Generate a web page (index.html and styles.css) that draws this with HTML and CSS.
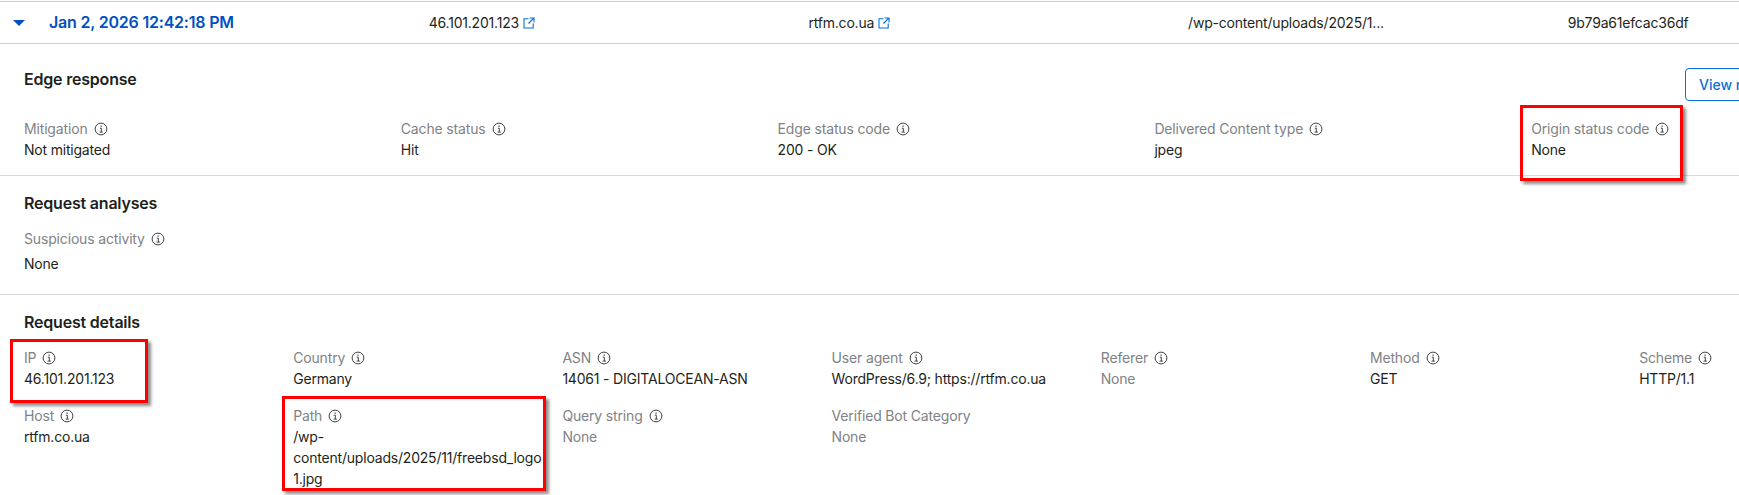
FILE: index.html
```html
<!DOCTYPE html>
<html lang="en">
<head>
<meta charset="utf-8">
<title>Security event</title>
<link rel="stylesheet" href="styles.css">
</head>
<body>
<svg class="defs" width="0" height="0" aria-hidden="true">
  <symbol id="info" viewBox="0 0 14 14">
    <circle cx="7" cy="7" r="5.9" fill="none" stroke="currentColor" stroke-width="1"/>
    <path d="M5.8 6.2H7.3V10M5.6 10.1H8.8" fill="none" stroke="currentColor" stroke-width="1"/>
    <rect x="6.5" y="3.5" width="1.2" height="1.3" fill="currentColor"/>
  </symbol>
  <symbol id="ext" viewBox="0 0 12 12">
    <path d="M5.5 1.8H1V11H10.2V6.5M6.6 1H11V5.4M11 1L5.5 6.5" fill="none" stroke="currentColor" stroke-width="1.1"/>
  </symbol>
</svg>
<main class="page">
  <div class="event-row">
    <span class="caret"></span>
    <span class="event-time">Jan 2, 2026 12:42:18 PM</span>
    <span class="event-cell">46.101.201.123<svg class="ext-icon"><use href="#ext"/></svg></span>
    <span class="event-cell">rtfm.co.ua<svg class="ext-icon"><use href="#ext"/></svg></span>
    <span class="event-cell">/wp-content/uploads/2025/1...</span>
    <span class="event-cell">9b79a61efcac36df</span>
  </div>

  <section class="section section-edge">
    <div class="section-head">
      <h2>Edge response</h2>
      <button class="view-btn" type="button">View rule details</button>
    </div>
    <div class="fields fields-5">
      <div class="field"><div class="label">Mitigation<svg class="info"><use href="#info"/></svg></div><div class="value">Not mitigated</div></div>
      <div class="field"><div class="label">Cache status<svg class="info"><use href="#info"/></svg></div><div class="value">Hit</div></div>
      <div class="field"><div class="label">Edge status code<svg class="info"><use href="#info"/></svg></div><div class="value">200 - OK</div></div>
      <div class="field"><div class="label">Delivered Content type<svg class="info"><use href="#info"/></svg></div><div class="value">jpeg</div></div>
      <div class="field"><div class="label">Origin status code<svg class="info"><use href="#info"/></svg></div><div class="value">None</div></div>
    </div>
  </section>

  <section class="section section-analyses">
    <h2>Request analyses</h2>
    <div class="fields fields-5 fields-analyses">
      <div class="field"><div class="label">Suspicious activity<svg class="info"><use href="#info"/></svg></div><div class="value">None</div></div>
    </div>
  </section>

  <section class="section section-details">
    <h2>Request details</h2>
    <div class="fields fields-7">
      <div class="field"><div class="label">IP<svg class="info"><use href="#info"/></svg></div><div class="value">46.101.201.123</div></div>
      <div class="field"><div class="label">Country<svg class="info"><use href="#info"/></svg></div><div class="value">Germany</div></div>
      <div class="field"><div class="label">ASN<svg class="info"><use href="#info"/></svg></div><div class="value">14061 - DIGITALOCEAN-ASN</div></div>
      <div class="field"><div class="label">User agent<svg class="info"><use href="#info"/></svg></div><div class="value">WordPress/6.9; https://rtfm.co.ua</div></div>
      <div class="field"><div class="label">Referer<svg class="info"><use href="#info"/></svg></div><div class="value muted">None</div></div>
      <div class="field"><div class="label">Method<svg class="info"><use href="#info"/></svg></div><div class="value">GET</div></div>
      <div class="field"><div class="label">Scheme<svg class="info"><use href="#info"/></svg></div><div class="value">HTTP/1.1</div></div>
      <div class="field"><div class="label">Host<svg class="info"><use href="#info"/></svg></div><div class="value">rtfm.co.ua</div></div>
      <div class="field"><div class="label">Path<svg class="info"><use href="#info"/></svg></div><div class="value">/wp-content/uploads/2025/11/freebsd_logo1.jpg</div></div>
      <div class="field"><div class="label">Query string<svg class="info"><use href="#info"/></svg></div><div class="value muted">None</div></div>
      <div class="field"><div class="label">Verified Bot Category</div><div class="value muted">None</div></div>
    </div>
  </section>

  <div class="mark mark-origin"></div>
  <div class="mark mark-ip"></div>
  <div class="mark mark-path"></div>
</main>
</body>
</html>
```
FILE: styles.css
```css
html, body {
  margin: 0;
  background: #fff;
}
body {
  width: 1739px;
  height: 495px;
  overflow: hidden;
  font-family: Inter, "Liberation Sans", sans-serif;
  font-size: 14px;
  line-height: 21px;
  letter-spacing: -0.2px;
  color: #1d1f20;
}
.defs {
  position: absolute;
}
.page {
  position: relative;
  width: 1910px;
}
.event-row {
  display: grid;
  grid-template-columns: 36px repeat(5, 379.7px);
  align-items: center;
  height: 41px;
  margin-top: 1px;
  padding-left: 13px;
  border-top: 1px solid #ccc;
  border-bottom: 1px solid #ccc;
}
.caret {
  width: 0;
  height: 0;
  border-left: 6.5px solid transparent;
  border-right: 6.5px solid transparent;
  border-top: 6.5px solid #0051c3;
}
.event-time {
  font-size: 16px;
  font-weight: 600;
  color: #0051c3;
}
.event-cell {
  display: flex;
  align-items: center;
  gap: 4px;
}
.ext-icon {
  width: 12px;
  height: 12px;
  color: #0a6fe0;
}
.section {
  padding: 0 24px;
  border-bottom: 1px solid #d9d9d9;
}
.section-edge {
  height: 131px;
}
.section-analyses {
  height: 118px;
}
.section-details {
  border-bottom: 0;
}
.section-head {
  display: flex;
  justify-content: space-between;
  align-items: flex-start;
}
h2 {
  margin: 0;
  font-size: 16px;
  line-height: 22px;
  font-weight: 600;
}
.section-edge h2 {
  margin-top: 24px;
}
.section-analyses h2,
.section-details h2 {
  padding-top: 16px;
}
.view-btn {
  width: 201px;
  height: 33px;
  margin-top: 24px;
  padding: 0 0 0 13px;
  text-align: left;
  border: 1px solid #0a6fe0;
  border-radius: 4px;
  background: #fff;
  color: #0a6fe0;
  font: 500 14px Inter, "Liberation Sans", sans-serif;
}
.fields {
  display: grid;
}
.fields-5 {
  grid-template-columns: repeat(5, 376.8px);
  margin-top: 17px;
}
.section-analyses .fields-analyses {
  margin-top: 14px;
}
.fields-7 {
  grid-template-columns: repeat(7, 269.2px);
  margin-top: 14px;
}
.field {
  padding-right: 20px;
  margin-bottom: 16px;
}
.label {
  display: flex;
  align-items: center;
  gap: 6px;
  letter-spacing: -0.16px;
  color: #808285;
}
.info {
  width: 14px;
  height: 14px;
  color: #3f4143;
}
.value {
  overflow-wrap: anywhere;
}
.fields-analyses .value {
  margin-top: 4px;
}
.muted {
  color: #808285;
}
.mark {
  position: absolute;
  box-sizing: border-box;
  border: 3px solid #f00;
  box-shadow: 3px 3px 3px rgba(0, 0, 0, 0.45);
}
.mark-origin {
  left: 1520px;
  top: 104px;
  width: 163px;
  height: 76px;
}
.mark-ip {
  left: 10px;
  top: 338px;
  width: 138px;
  height: 64px;
}
.mark-path {
  left: 282px;
  top: 395px;
  width: 264px;
  height: 95px;
}
```
